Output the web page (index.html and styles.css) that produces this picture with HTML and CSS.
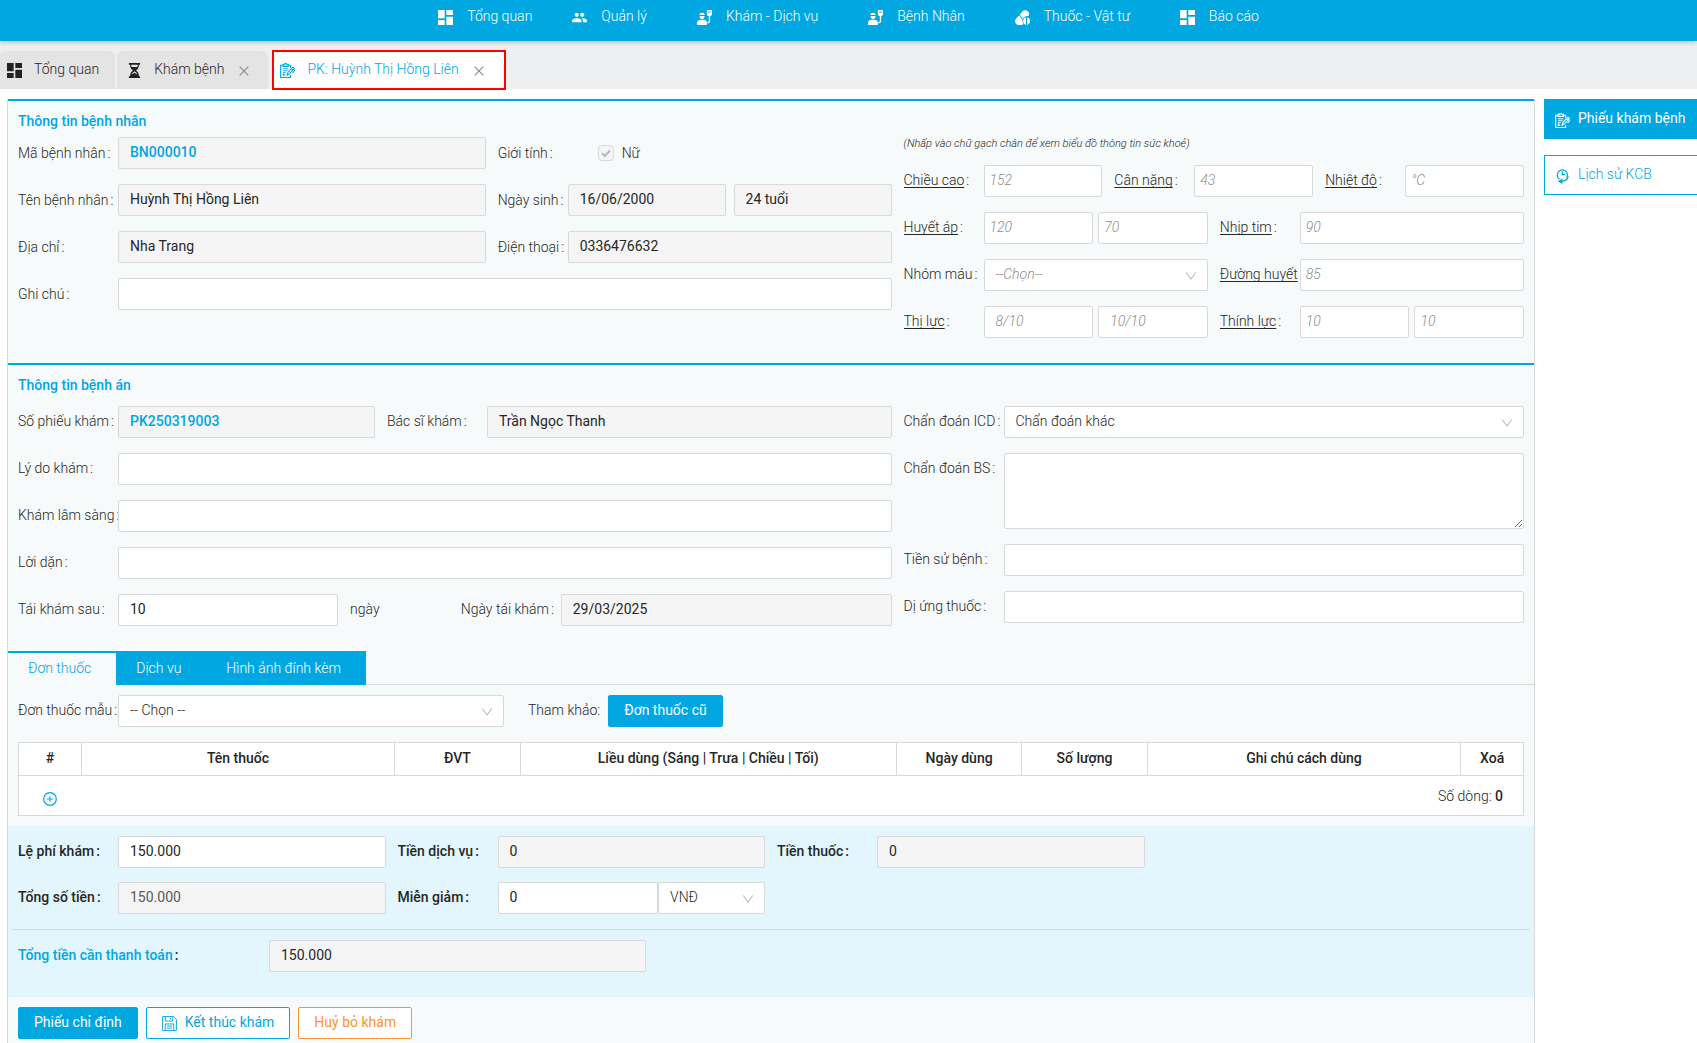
FILE: index.html
```html
<!DOCTYPE html>
<html lang="vi">
<head>
<meta charset="utf-8">
<meta name="viewport" content="width=device-width, initial-scale=1">
<title>PK: Huỳnh Thị Hồng Liên</title>
<link rel="stylesheet" href="styles.css">
</head>
<body>
<svg class="sprite" aria-hidden="true">
  <symbol id="i-dashboard" viewBox="3 3 18 18"><path fill="currentColor" d="M3 13h8V3H3v10zm0 8h8v-6H3v6zm10 0h8V11h-8v10zm0-18v6h8V3h-8z"/></symbol>
  <symbol id="i-people" viewBox="1 1 22 22"><path fill="currentColor" d="M16 11c1.66 0 2.99-1.34 2.99-3S17.66 5 16 5s-3 1.34-3 3 1.34 3 3 3zm-8 0c1.66 0 2.99-1.34 2.99-3S9.66 5 8 5 5 6.34 5 8s1.34 3 3 3zm0 2c-2.33 0-7 1.17-7 3.5V19h14v-2.5c0-2.33-4.67-3.5-7-3.5zm8 0c-.29 0-.62.02-.97.05 1.16.84 1.97 1.97 1.97 3.45V19h6v-2.5c0-2.33-4.67-3.5-7-3.5z"/></symbol>
  <symbol id="i-patient" viewBox="0 0 16 16"><path fill="currentColor" d="M2.4 5.4c.5-1.6 1.5-2.4 3-2.4s2.500.8 3 2.400zM2.700 6.300h5.400c0 1.900-1.100 3.200-2.700 3.200S2.700 8.200 2.700 6.300zM0 16v-2.300c0-2 1.800-3.200 4-3.200h3c2 0 3.500 1.100 3.500 3V16z"/><path fill="currentColor" fill-rule="evenodd" d="M10.500 0H16v4.200c0 1.300-1 2.100-2.200 2.300h-1c-1.300-.2-2.300-1-2.300-2.300zm1.700 1.500v1.300h2.100V1.500z"/><path fill="none" stroke="currentColor" stroke-width="1.400" d="M13.300 6.500v5.300c0 1.200-.9 1.900-2.300 1.900"/></symbol>
  <symbol id="i-pills" viewBox="0 0 16 16"><path fill="currentColor" d="M7.800 1.600a4.200 4.200 0 0 1 7 1.200c.5 1.300.3 2.600-.4 3.600-2.500-.5-4.900.6-6 3L5.100 5z"/><path fill="currentColor" d="M4.300 5.800l3.800 4.500c-.4 1.700 0 3.200 1 4.500-.9.600-1.700 1-2.900 1.100H3.500C1.500 15.600 0 14 0 12c0-1.200.5-2.200 1.300-3z"/><path fill="currentColor" d="M11.700 7.700v8.200c-1.800-.4-3-2-3-4.100s1.200-3.700 3-4.100zM13 7.700c1.800.4 3 2 3 4.100s-1.200 3.700-3 4.100z"/></symbol>
  <symbol id="i-hourglass" viewBox="0 0 13 16"><path fill="currentColor" fill-rule="evenodd" d="M.5 0h12v1.800h-1.300c0 3-1 4.900-3.100 6.200 2.100 1.300 3.100 3.200 3.100 6.200h1.300V16H.5v-1.800h1.300c0-3 1-4.900 3.100-6.200-2.100-1.300-3.100-3.200-3.100-6.200H.5zM3 1.800c0 1 .1 1.700.5 2.400h6c.4-.7.5-1.400.5-2.400zM6.500 8.800c-1.600.9-2.500 1.900-3 3.400l3-1.900 3 1.900c-.5-1.500-1.400-2.500-3-3.400z"/></symbol>
  <symbol id="i-record" viewBox="0 0 16 16"><g fill="none" stroke="currentColor"><path stroke-width="1.200" d="M3.200 2.400H.7v13h10.600v-2.700M8.800 2.400h2.500v2.800M3.200 1.400h1.500c.2-1.100 2.400-1.100 2.600 0h1.500v2.200H3.200z"/><path d="M3 6.200h6M3 8.300h5M3 10.300h3M4 11v3.200M2.400 12.600h3.200"/><path stroke-width="1.100" d="M7.500 13.200l1-3.200 4.800-5.200c.8-.7 2.200.6 1.500 1.500l-4.700 5.300zM12.200 6l1.600 1.500M14.900 6.400l.5 1.700-2 2.400"/></g></symbol>
  <symbol id="i-history" viewBox="0 0 16 16"><g fill="none" stroke="currentColor" stroke-width="1.300"><path d="M4.800 10.900A5.400 5.400 0 1 1 12.400 9.300"/><path d="M7.900 2.600v3.500h3.200"/><path d="M14 7.600c-.4 3.400-2.600 5.200-6.400 5.300"/></g><path fill="currentColor" d="M8 10v6l-5-3z"/></symbol>
  <symbol id="i-save" viewBox="0 0 16 16"><g fill="none" stroke="currentColor"><path d="M.6.600h11.800l3 3v11.800H.6z"/><path d="M3.700.6v4.800h7.800V.6M9.200 2v2M3.500 15.400V8.500h9v6.900M5.300 10.700h5.400M5.300 12.900h5.400"/></g></symbol>
  <symbol id="i-plus" viewBox="0 0 14 14"><g fill="none" stroke="currentColor"><circle cx="7" cy="7" r="6.300" stroke-width="1.200"/><path d="M7 4v6M4 7h6"/></g></symbol>
  <symbol id="i-close" viewBox="0 0 10 10"><path fill="none" stroke="currentColor" stroke-width="1.200" d="M.7.700l8.600 8.600M9.300.7L.7 9.300"/></symbol>
  <symbol id="i-down" viewBox="0 0 12 12"><path fill="none" stroke="currentColor" stroke-width="1.200" d="M1.200 2.500L6 9l4.800-6.500"/></symbol>
</svg>

<header class="topbar">
  <nav class="nav">
    <a class="nav-link" href="#"><svg><use href="#i-dashboard"/></svg>Tổng quan</a>
    <a class="nav-link group" href="#"><svg><use href="#i-people"/></svg>Quản lý</a>
    <a class="nav-link group" href="#"><svg><use href="#i-patient"/></svg>Khám - Dịch vụ</a>
    <a class="nav-link group" href="#"><svg><use href="#i-patient"/></svg>Bệnh Nhân</a>
    <a class="nav-link group" href="#"><svg><use href="#i-pills"/></svg>Thuốc - Vật tư</a>
    <a class="nav-link" href="#"><svg><use href="#i-dashboard"/></svg>Báo cáo</a>
  </nav>
</header>

<div class="tabbar">
  <div class="tab home"><svg class="ico"><use href="#i-dashboard"/></svg><a href="#">Tổng quan</a></div>
  <div class="tab"><svg class="ico"><use href="#i-hourglass"/></svg><a href="#">Khám bệnh</a><button class="close" aria-label="Đóng"><svg><use href="#i-close"/></svg></button></div>
  <div class="tab active"><svg class="ico"><use href="#i-record"/></svg><a href="#">PK: Huỳnh Thị Hồng Liên</a><button class="close" aria-label="Đóng"><svg><use href="#i-close"/></svg></button></div>
</div>

<div class="page">
  <main class="panel">
    <section class="section patient">
      <h2>Thông tin bệnh nhân</h2>
      <div class="grid">
        <div class="grid s14">
          <div class="field s13"><label for="ma">Mã bệnh nhân</label><input id="ma" class="code" value="BN000010" disabled></div>
          <div class="field s11"><label for="nu">Giới tính</label><input type="checkbox" id="nu" checked disabled><label for="nu" class="check-text">Nữ</label></div>
          <div class="field s13"><label for="ten">Tên bệnh nhân</label><input id="ten" value="Huỳnh Thị Hồng Liên" disabled></div>
          <div class="field s11 w70"><label for="ns">Ngày sinh</label><div class="pair wide"><input id="ns" value="16/06/2000" disabled><input aria-label="Tuổi" value="24 tuổi" disabled></div></div>
          <div class="field s13"><label for="dc">Địa chỉ</label><input id="dc" value="Nha Trang" disabled></div>
          <div class="field s11 w70"><label for="dt">Điện thoại</label><input id="dt" value="0336476632" disabled></div>
          <div class="field s24"><label for="gc">Ghi chú</label><input id="gc"></div>
        </div>
        <div class="s10 vitals">
          <p class="note">(Nhấp vào chữ gạch chân để xem biểu đồ thông tin sức khoẻ)</p>
          <div class="grid">
            <div class="field w80 s8"><label for="cao"><a href="#">Chiều cao</a></label><input id="cao" placeholder="152"></div>
            <div class="field w80 s8"><label for="nang"><a href="#">Cân nặng</a></label><input id="nang" placeholder="43"></div>
            <div class="field w80 s8"><label for="nhiet"><a href="#">Nhiệt độ</a></label><input id="nhiet" placeholder="°C"></div>
            <div class="field w80 s12"><label for="ha"><a href="#">Huyết áp</a></label><div class="pair"><input id="ha" placeholder="120"><input aria-label="Huyết áp tâm trương" placeholder="70"></div></div>
            <div class="field w80 s12"><label for="tim"><a href="#">Nhịp tim</a></label><input id="tim" placeholder="90"></div>
            <div class="field w80 s12"><label for="mau">Nhóm máu</label><div class="select"><select id="mau" class="hint"><option>--Chọn--</option></select><svg><use href="#i-down"/></svg></div></div>
            <div class="field w80 s12"><label for="dh"><a href="#">Đường huyết</a></label><input id="dh" placeholder="85"></div>
            <div class="field w80 s12"><label for="tl"><a href="#">Thị lực</a></label><div class="pair roomy"><input id="tl" placeholder="8/10"><input aria-label="Thị lực mắt phải" placeholder="10/10"></div></div>
            <div class="field w80 s12"><label for="thl"><a href="#">Thính lực</a></label><div class="pair"><input id="thl" placeholder="10"><input aria-label="Thính lực tai phải" placeholder="10"></div></div>
          </div>
        </div>
      </div>
    </section>

    <section class="section record">
      <h2>Thông tin bệnh án</h2>
      <div class="grid">
        <div class="grid s14">
          <div class="field s10"><label for="sp">Số phiếu khám</label><input id="sp" class="code" value="PK250319003" disabled></div>
          <div class="field s14"><label for="bs">Bác sĩ khám</label><input id="bs" value="Trần Ngọc Thanh" disabled></div>
          <div class="field s24"><label for="ld">Lý do khám</label><input id="ld"></div>
          <div class="field s24"><label for="kls">Khám lâm sàng</label><input id="kls"></div>
          <div class="field s24"><label for="loi">Lời dặn</label><input id="loi"></div>
          <div class="field s9"><label for="tk">Tái khám sau</label><input id="tk" value="10"></div>
          <span class="unit s3">ngày</span>
          <div class="field s12"><label for="ntk">Ngày tái khám</label><input id="ntk" value="29/03/2025" disabled></div>
        </div>
        <div class="grid s10">
          <div class="field s24"><label for="icd">Chẩn đoán ICD</label><div class="select"><select id="icd"><option>Chẩn đoán khác</option></select><svg><use href="#i-down"/></svg></div></div>
          <div class="field s24"><label for="cdbs">Chẩn đoán BS</label><textarea id="cdbs"></textarea></div>
          <div class="field s24"><label for="tsb">Tiền sử bệnh</label><input id="tsb"></div>
          <div class="field s24"><label for="dut">Dị ứng thuốc</label><input id="dut"></div>
        </div>
      </div>
    </section>

    <div class="subtabs" role="tablist">
      <button role="tab" aria-selected="true" class="subtab current">Đơn thuốc</button>
      <button role="tab" aria-selected="false" class="subtab">Dịch vụ</button>
      <button role="tab" aria-selected="false" class="subtab">Hình ảnh đính kèm</button>
    </div>

    <div class="medicine">
      <div class="thirds">
        <div class="field"><label for="dtm">Đơn thuốc mẫu</label><div class="select"><select id="dtm"><option>-- Chọn --</option></select><svg><use href="#i-down"/></svg></div></div>
        <div class="refer"><span>Tham khảo:</span><button class="btn primary">Đơn thuốc cũ</button></div>
      </div>
      <table>
        <colgroup><col class="c1"><col class="c5"><col class="c2"><col class="c6"><col class="c2"><col class="c2"><col class="c5"><col class="c1"></colgroup>
        <thead><tr><th>#</th><th>Tên thuốc</th><th>ĐVT</th><th>Liều dùng (Sáng | Trưa | Chiều | Tối)</th><th>Ngày dùng</th><th>Số lượng</th><th>Ghi chú cách dùng</th><th>Xoá</th></tr></thead>
        <tbody><tr><td class="add"><button aria-label="Thêm thuốc"><svg><use href="#i-plus"/></svg></button></td><td colspan="7" class="count">Số dòng: <b>0</b></td></tr></tbody>
      </table>
    </div>

    <div class="fees">
      <div class="quarters">
        <div class="field"><label for="lp">Lệ phí khám</label><input id="lp" value="150.000"></div>
        <div class="field"><label for="tdv">Tiền dịch vụ</label><input id="tdv" value="0" disabled></div>
        <div class="field"><label for="tt">Tiền thuốc</label><input id="tt" value="0" disabled></div>
        <div class="field first"><label for="tst">Tổng số tiền</label><input id="tst" class="dim" value="150.000" disabled></div>
        <div class="field"><label for="mg">Miễn giảm</label><div class="discount"><input id="mg" value="0"><div class="select"><select aria-label="Đơn vị"><option>VNĐ</option></select><svg><use href="#i-down"/></svg></div></div></div>
      </div>
      <hr>
      <div class="total"><label for="tong"><span>Tổng tiền cần thanh toán</span></label><input id="tong" value="150.000" disabled></div>
    </div>

    <div class="actions">
      <button class="btn primary">Phiếu chỉ định</button>
      <button class="btn outline"><svg><use href="#i-save"/></svg>Kết thúc khám</button>
      <button class="btn danger">Huỷ bỏ khám</button>
    </div>
  </main>

  <aside class="side">
    <button class="side-btn on"><svg><use href="#i-record"/></svg>Phiếu khám bệnh</button>
    <button class="side-btn"><svg><use href="#i-history"/></svg>Lịch sử KCB</button>
  </aside>
</div>
</body>
</html>
```
FILE: styles.css
```css
:root {
  --blue: #00a7e1;
  --line: #d9d9d9;
  --text: #262626;
}

* { box-sizing: border-box; }

body {
  margin: 0;
  background: #fff;
  color: var(--text);
  font: 300 14px/22px Roboto, "Noto Sans", sans-serif;
}

a { color: inherit; text-decoration: none; }
button, input, select, textarea { font: inherit; color: inherit; margin: 0; border-radius: 2px; }
button { cursor: pointer; }
svg { flex: none; width: 16px; height: 16px; }
.sprite { display: none; }

/* top navigation */
.topbar {
  position: relative;
  display: flex;
  justify-content: center;
  height: 41px;
  padding-bottom: 9px;
  background: var(--blue);
  color: #fff;
  box-shadow: 0 1px 5px rgba(0, 0, 0, .25);
}
.nav { display: flex; gap: 40px; }
.nav-link { display: flex; align-items: center; gap: 14px; }
.nav-link.group { margin-right: 10px; }
.nav-link svg { width: 15px; height: 15px; margin-top: 3px; }

/* open pages */
.tabbar { display: flex; gap: 2px; padding-top: 10px; background: #eeeff0; }
.tab {
  display: flex;
  align-items: center;
  height: 38px;
  padding: 0 19px 2px 10px;
  background: #e4e4e4;
  border-radius: 6px 6px 0 0;
}
.tab.home { padding: 0 16px 2px 7px; }
.tab .ico { width: 15px; height: 15px; margin: 3px 12px 0 0; color: #222; }
.tab.active {
  margin-left: 3px;
  padding: 0 21px 2px 7px;
  background: #fff;
  color: var(--blue);
  border-radius: 0;
  outline: 2px solid #f00;
  outline-offset: -1px;
}
.tab.active .ico { color: var(--blue); }
.close { display: flex; margin: 3px 0 0 15px; padding: 0; border: 0; background: none; color: #8c8c8c; }
.close svg { width: 10px; height: 10px; }

/* page frame */
.page { display: flex; gap: 9px; padding: 10px 0 0 7px; }
.panel {
  flex: 1;
  min-width: 0;
  border: solid var(--line);
  border-width: 0 1px;
  background: #f6fafb;
}
.side { display: flex; flex-direction: column; gap: 16px; width: 153px; }
.side-btn {
  display: flex;
  align-items: center;
  gap: 8px;
  height: 40px;
  padding: 0 10px 2px;
  border: 1px solid var(--blue);
  border-right: 0;
  border-radius: 0;
  background: #fff;
  color: var(--blue);
  white-space: nowrap;
}
.side-btn svg { width: 15px; height: 15px; margin-top: 4px; }
.side-btn.on { background: var(--blue); color: #fff; font-weight: 400; }

/* form sections */
.section { padding: 9px 10px 25px; border-top: 2px solid var(--blue); }
h2 { margin: 0 0 5px; font-size: 14px; line-height: 22px; font-weight: 500; color: var(--blue); }
.record h2 { margin-bottom: 10px; }

.grid {
  display: grid;
  grid-template-columns: repeat(24, minmax(0, 1fr));
  gap: 15px 12px;
  align-content: start;
}
.s3 { grid-column: span 3; }
.s8 { grid-column: span 8; }
.s9 { grid-column: span 9; }
.s10 { grid-column: span 10; }
.s11 { grid-column: span 11; }
.s12 { grid-column: span 12; }
.s13 { grid-column: span 13; }
.s14 { grid-column: span 14; }
.s24 { grid-column: span 24; }

.field { display: grid; grid-template-columns: 100px minmax(0, 1fr); align-items: start; }
.field.w70 { grid-template-columns: 70px minmax(0, 1fr); }
.field.w80 { grid-template-columns: 80px minmax(0, 1fr); }
.field:has(> [type="checkbox"]) { grid-template-columns: 100px 24px minmax(0, 1fr); align-items: center; }

label { overflow: hidden; line-height: 30px; white-space: nowrap; }
label::after { content: ":"; margin-left: 2px; }
label.check-text::after { content: none; }
label a { text-decoration: underline; text-decoration-skip-ink: none; text-underline-offset: 2px; }
.patient label { line-height: 32px; }
.unit { line-height: 30px; }

input, select, textarea {
  display: block;
  width: 100%;
  height: 32px;
  padding: 0 11px 2px;
  border: 1px solid var(--line);
  background: #fff;
  font-weight: 400;
}
input:disabled { background: #f5f5f5; color: var(--text); }
input.code { color: var(--blue); font-weight: 500; }
input.dim { color: #595959; }
textarea { height: 76px; resize: vertical; }
input::placeholder { color: #8c8c8c; font-weight: 300; font-style: italic; }
.vitals input { padding-left: 5px; }
.vitals .roomy input { padding-left: 11px; }
.vitals label { line-height: 30px; }

[type="checkbox"] {
  appearance: none;
  width: 16px;
  height: 16px;
  padding: 0;
  border-radius: 4px;
}
[type="checkbox"]:checked {
  background: #f5f5f5 url("data:image/svg+xml,%3Csvg xmlns='http://www.w3.org/2000/svg' viewBox='0 0 14 14'%3E%3Cpath d='M3 7.200l2.800 2.800L11 4.500' fill='none' stroke='%23b8b8b8' stroke-width='2'/%3E%3C/svg%3E");
}

.pair { display: grid; grid-template-columns: 1fr 1fr; gap: 5px; }
.pair.wide { gap: 8px; }
.pair input { min-width: 0; }

.select { display: grid; align-items: center; }
.select select, .select svg { grid-area: 1 / 1; }
.select select { appearance: none; font-weight: 300; }
.select select.hint { color: #8c8c8c; font-style: italic; }
.select svg { justify-self: end; width: 12px; height: 12px; margin: 2px 11px 0 0; color: #bfbfbf; pointer-events: none; }

.note { margin: 0 0 14px; font-size: 11px; line-height: 14px; font-style: italic; }

/* prescription */
.subtabs { display: flex; border-bottom: 1px solid var(--line); }
.subtab {
  height: 34px;
  margin-bottom: -1px;
  padding: 0 25px 0 20px;
  border: 0;
  border-radius: 0;
  background: var(--blue);
  color: #fff;
}
.subtab.current { padding-bottom: 2px; border-top: 2px solid var(--blue); background: #f6fafb; color: var(--blue); }
.medicine { padding: 10px; }
.thirds { display: grid; grid-template-columns: repeat(3, minmax(0, 1fr)); gap: 24px; margin-bottom: 15px; }
.refer { display: flex; gap: 8px; line-height: 30px; }

table { width: 100%; border-collapse: collapse; table-layout: fixed; background: #fff; }
.c1 { width: 4.167%; }
.c2 { width: 8.333%; }
.c5 { width: 20.833%; }
.c6 { width: 25%; }
th { height: 33px; padding: 0 0 2px; border: 1px solid var(--line); font-weight: 500; }
td { height: 40px; padding: 0; }
tbody tr { border: 1px solid var(--line); }
b { font-weight: 500; }
.add { text-align: center; }
.add button { padding: 12px 0 0; border: 0; background: none; color: var(--blue); line-height: 0; }
.add svg { width: 14px; height: 14px; }
.count { padding-right: 20px; text-align: right; }

/* fees */
.fees { padding: 10px 10px 25px; background: #e3f6fd; }
.fees label { font-weight: 500; }
.quarters { display: grid; grid-template-columns: repeat(4, minmax(0, 1fr)); gap: 14px 12px; }
.quarters .first { grid-column-start: 1; }
.discount { display: grid; grid-template-columns: 3fr 2fr; }
hr { margin: 15px -6px 10px; border: 0; border-top: 1px solid var(--line); }
.total { display: grid; grid-template-columns: repeat(12, 1fr); }
.total label { grid-column: span 2; }
.total input { grid-column: span 3; }
.total span { color: var(--blue); }

/* buttons */
.actions { display: flex; gap: 8px; padding: 10px 10px 4px; }
.btn {
  display: flex;
  align-items: center;
  gap: 8px;
  height: 32px;
  padding: 0 15px 2px;
  border: 1px solid var(--blue);
  background: #fff;
  color: var(--blue);
  font-weight: 400;
}
.btn svg { width: 15px; height: 15px; margin-top: 3px; }
.btn.primary { background: var(--blue); color: #fff; }
.btn.danger { border-color: #fa9628; color: #fa9628; }
```
